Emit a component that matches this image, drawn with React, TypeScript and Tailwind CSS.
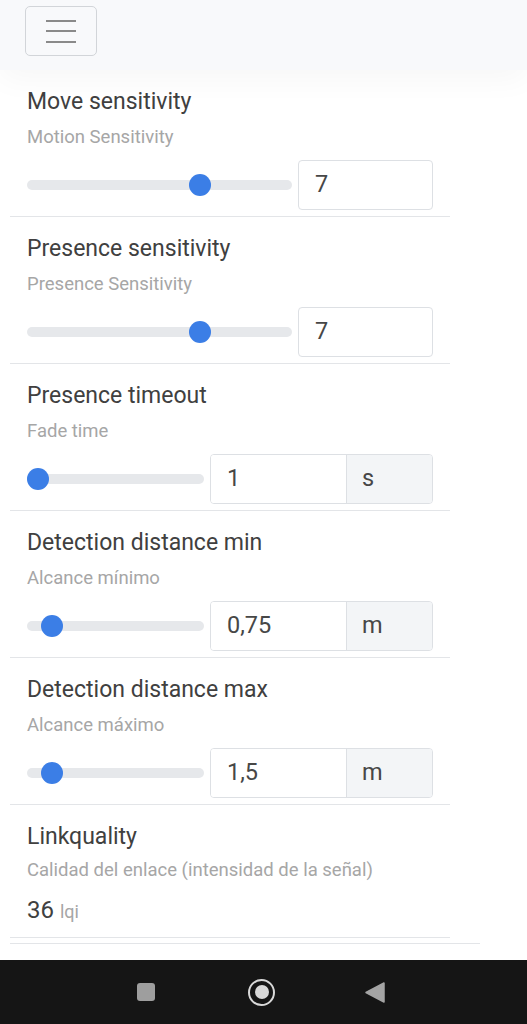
import React from "react";

type Item = {
  title: string;
  sub: string;
  value: string;
  pct: number;
  unit?: string;
};

const items: Item[] = [
  { title: "Move sensitivity", sub: "Motion Sensitivity", value: "7", pct: 66.7 },
  { title: "Presence sensitivity", sub: "Presence Sensitivity", value: "7", pct: 66.7 },
  { title: "Presence timeout", sub: "Fade time", value: "1", pct: 0, unit: "s" },
  { title: "Detection distance min", sub: "Alcance mínimo", value: "0,75", pct: 9, unit: "m" },
  { title: "Detection distance max", sub: "Alcance máximo", value: "1,5", pct: 9, unit: "m" },
];

function Slider({ pct }: { pct: number }) {
  return (
    <div className="relative flex-1 h-[22px] flex items-center">
      <div className="w-full h-[10px] rounded-full bg-[#e6e8eb]" />
      <div className="absolute inset-y-0 left-[0px] right-[22px]">
        <div
          className="absolute top-0 w-[22px] h-[22px] rounded-full bg-[#3b7ee6]"
          style={{ left: `${pct}%` }}
        />
      </div>
    </div>
  );
}

function Row({ item }: { item: Item }) {
  return (
    <div className="pt-[18px] pb-[6px] px-[17px] border-b border-[#e3e5e8]">
      <div className="h-[28px] leading-[28px] text-[23px] text-[#404040]">{item.title}</div>
      <div className="mt-[9px] h-[24px] leading-[24px] text-[18.5px] text-[#a6a6a6]">{item.sub}</div>
      <div className="mt-[11px] h-[50px] flex items-center">
        <Slider pct={item.pct} />
        {item.unit ? (
          <div className="ml-[6px] flex h-[50px] w-[223px] rounded-[4px] border border-[#dde0e4] overflow-hidden">
            <div className="w-[135px] bg-white pl-[16px] flex items-center text-[23.5px] text-[#474747]">
              {item.value}
            </div>
            <div className="flex-1 bg-[#f3f5f7] border-l border-[#dde0e4] pl-[15px] flex items-center text-[23.5px] text-[#474747]">
              {item.unit}
            </div>
          </div>
        ) : (
          <div className="ml-[6px] h-[50px] w-[135px] rounded-[4px] border border-[#dde0e4] bg-white pl-[16px] flex items-center text-[23.5px] text-[#474747]">
            {item.value}
          </div>
        )}
      </div>
    </div>
  );
}

export default function App() {
  return (
    <div
      className="w-[527px] h-[1024px] bg-white flex flex-col overflow-hidden"
      style={{ fontFamily: "Roboto, 'Liberation Sans', sans-serif" }}
    >
      <div className="relative h-[70px] shrink-0 bg-[#f8f9fb] shadow-[0_10px_30px_rgba(0,0,0,0.035)] z-10">
        <div className="absolute left-[25px] top-[6px] w-[72px] h-[50px] rounded-[5px] border border-[#d2d5d9] flex flex-col items-center justify-center gap-[8.5px]">
          <div className="w-[30px] h-[2px] bg-[#8a8a8a]" />
          <div className="w-[30px] h-[2px] bg-[#8a8a8a]" />
          <div className="w-[30px] h-[2px] bg-[#8a8a8a]" />
        </div>
      </div>
      <div className="flex-1">
        <div className="mx-[10px] w-[440px]">
          {items.map((it) => (
            <Row key={it.title} item={it} />
          ))}
          <div className="pt-[18px] px-[17px] h-[133px] border-b border-[#e3e5e8]">
            <div className="h-[28px] leading-[28px] text-[23px] text-[#404040]">Linkquality</div>
            <div className="mt-[7px] h-[24px] leading-[24px] text-[18.5px] text-[#a6a6a6]">
              Calidad del enlace (intensidad de la señal)
            </div>
            <div className="mt-[14px] h-[28px] leading-[28px] flex items-baseline">
              <span className="text-[24px] text-[#404040]">36</span>
              <span className="ml-[6px] text-[18px] text-[#a6a6a6]">lqi</span>
            </div>
          </div>
        </div>
        <div className="mx-[10px] mt-[5px] w-[470px] h-px bg-[#e3e5e8]" />
      </div>
      <div className="h-[64px] shrink-0 bg-[#151515] flex items-center">
        <div className="ml-[137px] w-[18px] h-[18px] rounded-[3px] bg-[#9e9e9e]" />
        <div className="ml-[93px] w-[27px] h-[27px] rounded-full border-[2.5px] border-[#d8d8d8] flex items-center justify-center">
          <div className="w-[14px] h-[14px] rounded-full bg-[#d8d8d8]" />
        </div>
        <svg className="ml-[90px]" width="20" height="21" viewBox="0 0 20 21">
          <path d="M19 1 L19 20 L1 10.5 Z" fill="#a4a4a4" stroke="#a4a4a4" strokeWidth="1.5" strokeLinejoin="round" />
        </svg>
      </div>
    </div>
  );
}
